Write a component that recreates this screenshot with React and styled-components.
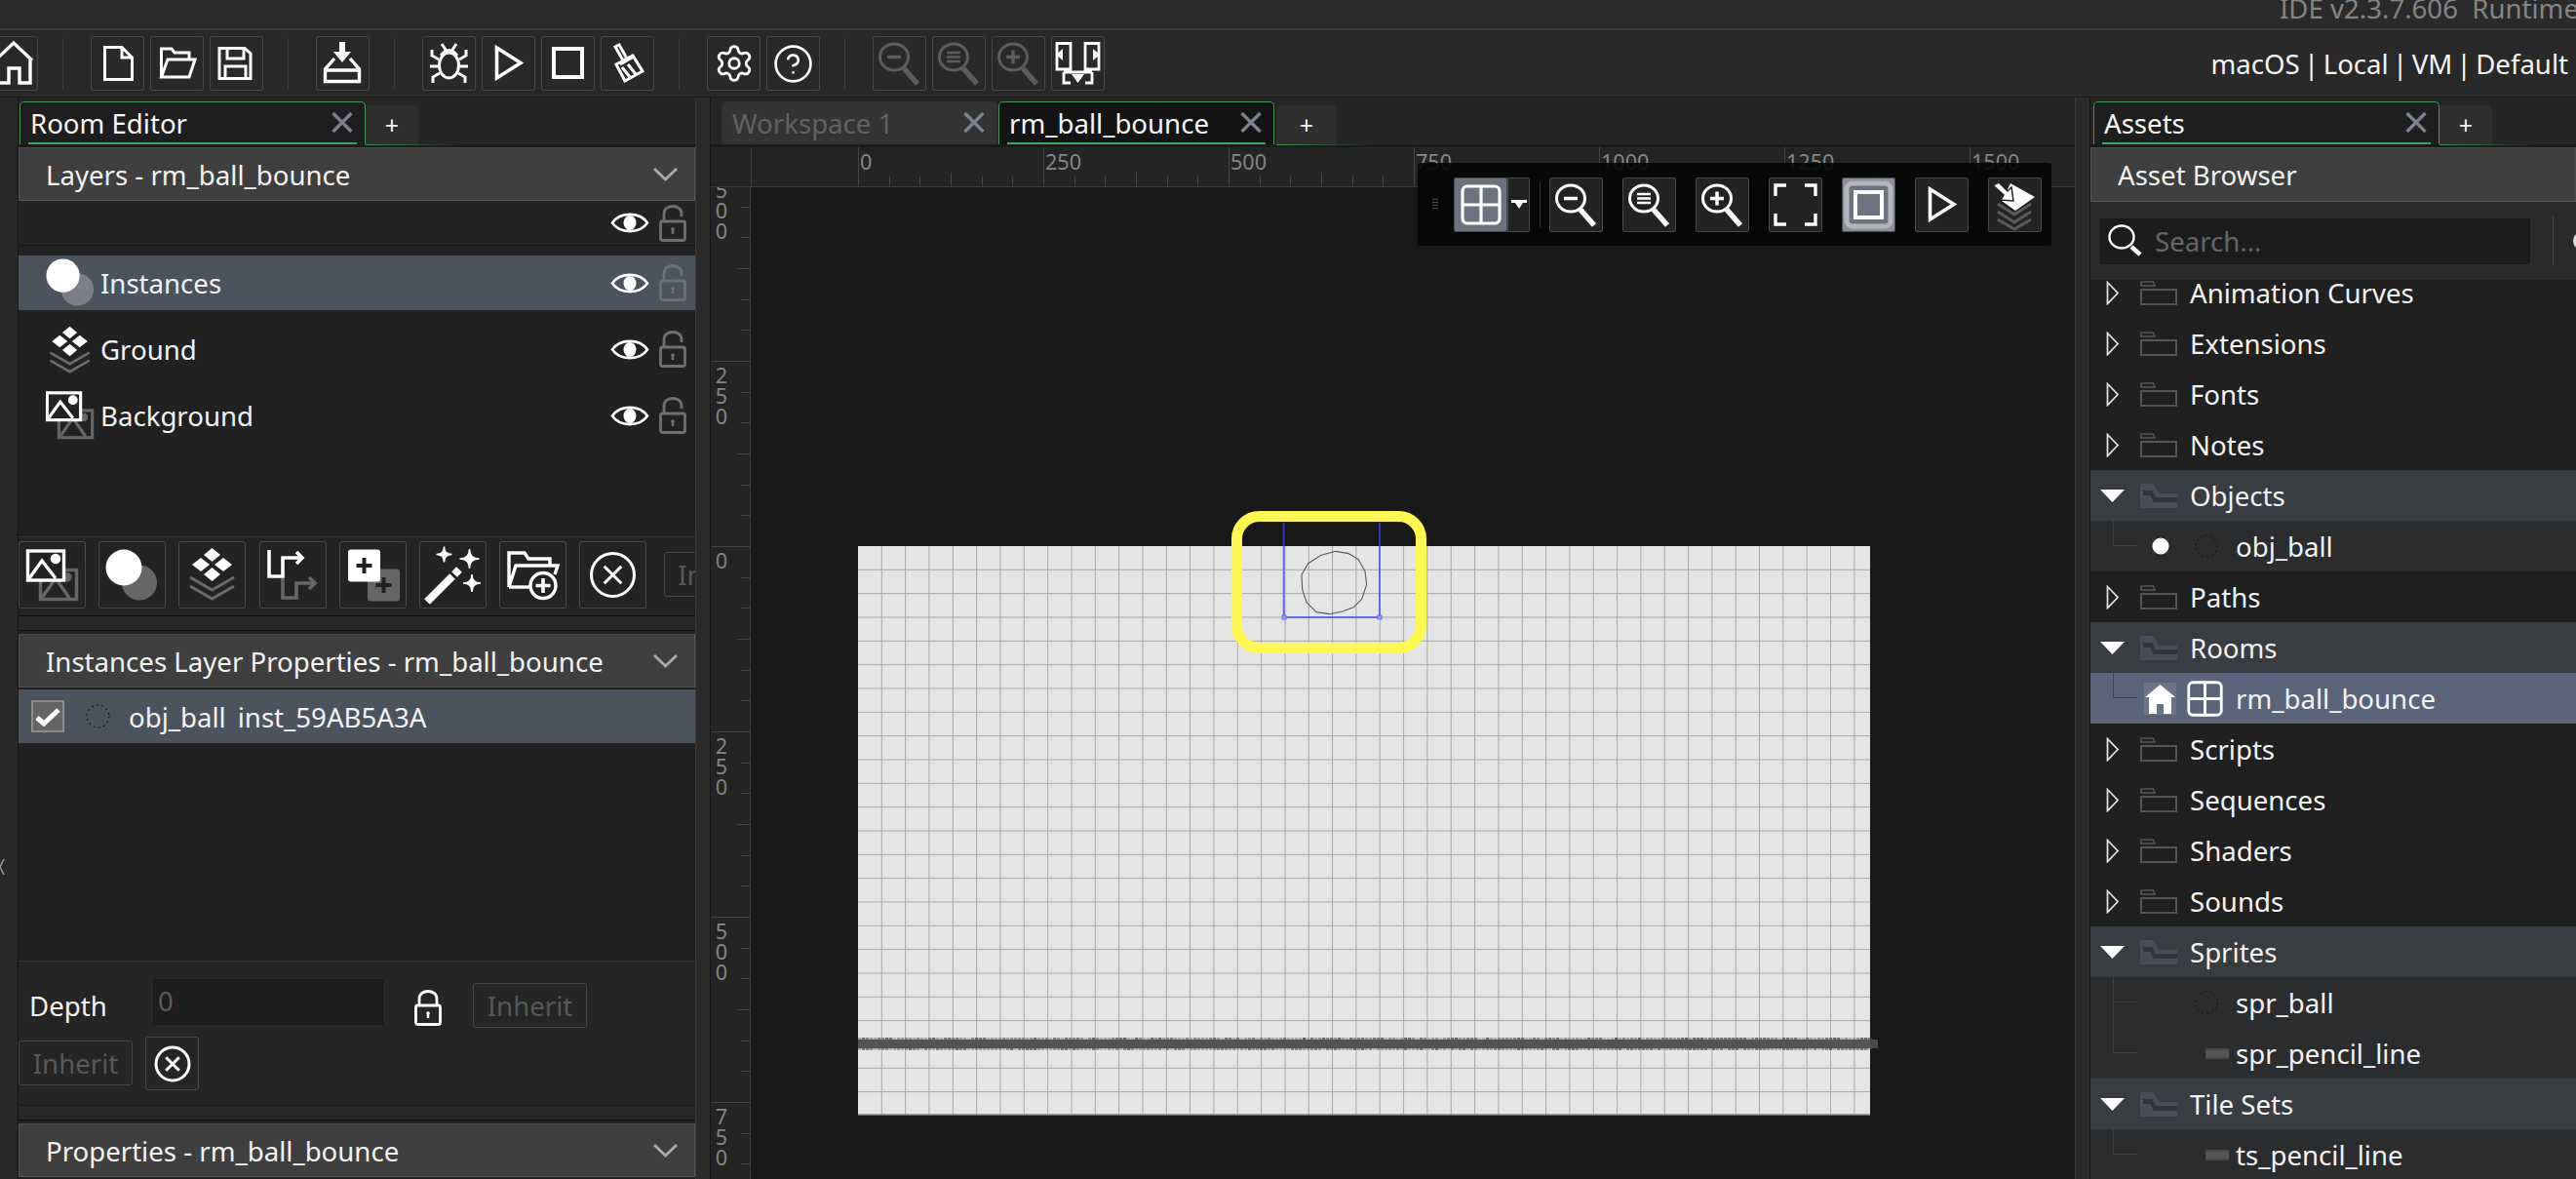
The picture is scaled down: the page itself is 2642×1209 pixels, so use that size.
import React from 'react'
import styled, { createGlobalStyle } from 'styled-components'
import { Settings, CircleHelp } from 'lucide-react'

const GlobalStyle = createGlobalStyle`
  html, body {
    margin: 0;
    background: #212121;
    overflow: hidden;
  }
  * {
    box-sizing: border-box;
  }
  svg {
    display: block;
  }
`

const Page = styled('div')`
  width: 2642px;
  height: 1209px;
  display: flex;
  flex-direction: column;
  overflow: hidden;
  background: #212121;
  color: #f2f2f2;
  font-family: 'Noto Sans', 'Open Sans', sans-serif;
  font-size: 27.6px;
  white-space: nowrap;
`

const TitleBar = styled('div')`
  height: 31px;
  flex: none;
  padding-left: 2338px;
  background: #2a2a2a;
  border-bottom: 2px solid #3c3c3c;
  color: #858585;
  overflow: hidden;
  line-height: 16px;
`

const Toolbar = styled('div')`
  height: 69px;
  flex: none;
  display: flex;
  align-items: center;
  background: #292929;
  border-bottom: 1px solid #1b1b1b;
  overflow: hidden;
`

const ToolGroup = styled('div')`
  display: flex;
  gap: 6px;
  flex: none;
  margin-left: ${p => p.$shift || 0}px;
`

const ToolSep = styled('div')`
  width: 1px;
  height: 52px;
  margin: 0 28px 0 25px;
  flex: none;
  background: #3d3d3d;
`

const ToolButton = styled('div')`
  width: 55px;
  height: 56px;
  flex: none;
  display: grid;
  place-items: center;
  border-radius: 3px;
  color: ${p => (p.$dim ? '#5c5c5c' : '#fff')};
  background: ${p => p.$bg || 'transparent'};
  box-shadow: inset 0 0 0 1px #484848;
`

const Target = styled('div')`
  margin-left: auto;
  padding-right: 8px;
  color: #f4f4f4;
  word-spacing: -2.8px;
`

const Workspace = styled('div')`
  flex: 1;
  min-height: 0;
  display: flex;
`

const Gutter = styled('div')`
  width: 19px;
  flex: none;
  padding-top: 780px;
  background: #282828;
  border-right: 1px solid #161616;
  color: #999;
`

const Splitter = styled('div')`
  width: ${p => p.$w}px;
  flex: none;
  background: #2b2b2b;
  border-left: 1px solid #3a3a3a;
  border-right: 1px solid #161616;
`

const SidePanel = styled('section')`
  width: ${p => p.$w}px;
  flex: none;
  display: flex;
  flex-direction: column;
  overflow: hidden;
  background: #212121;
`

const TabStrip = styled('div')`
  height: 51px;
  flex: none;
  display: flex;
  align-items: flex-start;
  padding: 4px 0 0 ${p => p.$pad || 1}px;
  background: #252525;
  border-bottom: 3px solid #1a1a1a;
`

const Tab = styled('div')`
  position: relative;
  width: ${p => p.$w}px;
  height: 44px;
  flex: none;
  display: flex;
  align-items: center;
  justify-content: space-between;
  margin-left: ${p => p.$left || 0}px;
  padding: 0 12px 2px 10px;
  border-radius: 5px 5px 0 0;
  border: 1px solid ${p => (p.$active ? '#3f9a55' : '#303030')};
  border-bottom: 0;
  background: ${p => p.$bg || '#1e1e1e'};
  color: ${p => (p.$active ? '#f6f6f6' : '#626262')};

  &::after {
    content: '';
    display: ${p => (p.$active ? 'block' : 'none')};
    position: absolute;
    left: 8px;
    right: 8px;
    bottom: 0;
    height: 2px;
    background: #3fa45a;
  }
`

const AddTab = styled('div')`
  position: relative;
  width: ${p => p.$w || 54}px;
  height: 40px;
  margin-top: 4px;
  margin-left: ${p => p.$left || 0}px;
  flex: none;
  display: grid;
  place-items: center;
  border-radius: 5px 5px 0 0;
  background: #2f2f2f;
  color: #f4f4f4;
  font-size: 25px;

  &::after {
    content: '';
    position: absolute;
    left: 0;
    bottom: -1px;
    width: 100px;
    height: 1px;
    background: linear-gradient(to right, #3f9a55, transparent);
  }
`

const PanelHeader = styled('div')`
  height: ${p => p.$h || 55}px;
  flex: none;
  display: flex;
  align-items: center;
  justify-content: space-between;
  padding: 0 17px 0 27px;
  background: #3f3f3f;
  border: 1px solid #565656;
  border-top-color: #4a4a4a;
`

const EyeRow = styled('div')`
  height: 46px;
  flex: none;
  display: flex;
  justify-content: flex-end;
  padding-right: 9px;
  align-items: center;
  background: #232323;
  border-bottom: 1px solid #171717;
`

const EyeLock = styled('div')`
  display: flex;
  align-items: center;
  gap: 10px;
  flex: none;
`

const LayerList = styled('div')`
  height: 299px;
  flex: none;
  display: flex;
  flex-direction: column;
  gap: 12px;
  padding-top: 10px;
  border-bottom: 1px solid #333;
`

const LayerRow = styled('div')`
  height: 56px;
  display: flex;
  align-items: center;
  padding: 0 9px 0 28px;
  background: ${p => (p.$selected ? '#4b535f' : 'transparent')};
`

const LayerName = styled('span')`
  flex: 1;
  padding-left: 6px;
`

const ButtonBar = styled('div')`
  height: 81px;
  flex: none;
  display: flex;
  gap: 13.2px;
  padding-top: 4px;
  background: #232323;
  border-bottom: 1px solid #111;
  overflow: hidden;
`

const BarButton = styled('div')`
  width: 69px;
  height: 69px;
  flex: none;
  display: grid;
  place-items: center;
  border-radius: 3px;
  box-shadow: inset 0 0 0 1px #474747;
  color: #fff;
`

const SmallButton = styled('div')`
  width: 117px;
  height: 46px;
  flex: none;
  display: grid;
  place-items: center;
  border: 1px solid #464646;
  border-radius: 3px;
  color: #585858;
  margin-top: ${p => p.$top || 0}px;
  margin-left: ${p => p.$left || 0}px;
`

const Strip = styled('div')`
  height: 15px;
  flex: none;
  background: #282828;
  border-bottom: 1px solid #111;
  margin-bottom: 3px;
`

const InstanceList = styled('div')`
  height: 281px;
  flex: none;
  padding-top: 2px;
  border-bottom: 1px solid #333;
`

const InstanceRow = styled('div')`
  height: 55px;
  display: flex;
  align-items: center;
  padding-left: 13px;
  background: #4b535f;
`

const CheckBox = styled('div')`
  width: 34px;
  height: 33px;
  flex: none;
  display: grid;
  place-items: center;
  margin-right: 22px;
  background: #646464;
  border: 2px solid #8c8c8c;
  color: #fff;
`

const InstanceName = styled('span')`
  margin: 0 ${p => p.$gap || 0}px 0 ${p => p.$left || 0}px;
`

const DepthArea = styled('div')`
  height: 148px;
  flex: none;
  padding-top: 18px;
  background: #252525;
  border-bottom: 1px solid #181818;
`

const DepthRow = styled('div')`
  display: flex;
  align-items: flex-start;
  height: ${p => p.$h}px;
`

const DepthLabel = styled('div')`
  width: 138px;
  padding: 8px 0 0 11px;
`

const DepthInput = styled('div')`
  width: 236px;
  height: 47px;
  flex: none;
  padding-left: 4px;
  line-height: 42px;
  color: #5c5c5c;
  background: #1d1d1d;
  border: 1px solid #181818;
`

const LockSlot = styled('div')`
  margin: 10px 32px 0 32px;
  color: #fff;
`

const CloseBox = styled('div')`
  width: 55px;
  height: 55px;
  margin: -4px 0 0 13px;
  flex: none;
  display: grid;
  place-items: center;
  border: 1px solid #484848;
  border-radius: 3px;
  color: #fff;
`

const CenterPanel = styled('section')`
  position: relative;
  width: 1399px;
  flex: none;
  display: flex;
  flex-direction: column;
  overflow: hidden;
  background: #181818;
`

const RulerTop = styled('svg')`
  display: block;
  flex: none;
  background: #242424;
`

const CanvasRow = styled('div')`
  flex: 1;
  min-height: 0;
  display: flex;
`

const RulerLeft = styled('svg')`
  display: block;
  flex: none;
  background: #242424;
`

const RoomCanvas = styled('svg')`
  display: block;
  flex: none;
`

const FloatBar = styled('div')`
  position: absolute;
  top: 67px;
  left: 725px;
  width: 650px;
  height: 85px;
  display: flex;
  align-items: center;
  gap: 20px;
  border-radius: 3px;
  background: rgba(6, 6, 6, 0.9);
`

const Grip = styled('div')`
  width: 6px;
  height: 11px;
  margin: 0 -4px 0 15px;
  flex: none;
  background: repeating-linear-gradient(to bottom, #4e4e4e 0 1px, transparent 1px 3px);
`

const SplitButton = styled('div')`
  display: flex;
  flex: none;
  margin-right: -10px;
`

const DropButton = styled('div')`
  width: 23px;
  height: 56px;
  display: grid;
  place-items: center;
  background: #222;
  box-shadow: inset 0 0 0 1px #484848;
  border-radius: 0 3px 3px 0;
`

const FloatSep = styled('div')`
  width: 1px;
  height: 46px;
  margin-right: -11px;
  flex: none;
  background: #343434;
`

const FloatButton = styled(ToolButton)`
  background: ${p => p.$bg || '#232323'};
`

const SearchBar = styled('div')`
  height: 80px;
  flex: none;
  display: flex;
  align-items: center;
  padding-left: 10px;
  background: #2a2a2a;
`

const SearchBox = styled('div')`
  width: 441px;
  height: 47px;
  flex: none;
  display: flex;
  align-items: center;
  gap: 12px;
  padding-left: 7px;
  background: #1c1c1c;
  border: 1px solid #181818;
  border-radius: 2px;
  color: #666;
`

const SearchSep = styled('div')`
  width: 1px;
  height: 51px;
  margin: 0 20px 0 23px;
  flex: none;
  background: #4a4a4a;
`

const SearchExtra = styled('div')`
  width: 30px;
  height: 24px;
  flex: none;
  border: 3px solid #ddd;
  border-radius: 50%;
`

const Tree = styled('div')`
  flex: 1;
  min-height: 0;
  overflow: hidden;
`

const TreeScroll = styled('div')`
  margin-top: -13px;
`

const rowColors = { plain: '#202020', open: '#393c41', child: '#2b2c2e', selected: '#5a657c' }

const TreeRow = styled('div')`
  position: relative;
  height: 52px;
  display: flex;
  align-items: center;
  padding-left: ${p => (p.$kind === 'child' || p.$kind === 'selected' ? 55 : 10)}px;
  background: ${p => rowColors[p.$kind]};
`

const ArrowSlot = styled('div')`
  width: 25px;
  margin-right: 16px;
  flex: none;
  display: grid;
  place-items: center;
  color: #fff;
`

const FolderSlot = styled('div')`
  margin-right: 13px;
  flex: none;
`

const Connector = styled('span')`
  position: absolute;
  left: 23px;
  top: 0;
  width: 25px;
  height: 26px;
  border-left: 1px solid ${p => (p.$strong ? '#3d4350' : '#3f4042')};
  border-bottom: 1px solid ${p => (p.$strong ? '#3d4350' : '#3f4042')};

  &::after {
    content: '';
    display: ${p => (p.$through ? 'block' : 'none')};
    position: absolute;
    left: -1px;
    top: 26px;
    height: 26px;
    border-left: 1px solid #3f4042;
  }
`

const MarkSlot = styled('div')`
  width: 33px;
  height: 33px;
  flex: none;
  display: grid;
  place-items: center;
  background: ${p => (p.$tint ? '#6b7486' : 'transparent')};
`

const ThumbSlot = styled('div')`
  width: 50px;
  margin-left: 11px;
  padding-left: ${p => p.$inset || 0}px;
  flex: none;
`

const PencilMark = styled('div')`
  width: 24px;
  height: 11px;
  background: #555;
  box-shadow: inset 0 2px 0 #484848, inset 0 -2px 0 #484848;
`

const CloseX = () => (
  <svg width="22" height="21" viewBox="0 0 22 21" fill="none" stroke="#7b8391" strokeWidth="3.4">
    <path d="M1.5 1 L20.5 20 M20.5 1 L1.5 20" />
  </svg>
)

const Chevron = () => (
  <svg width="25" height="16" viewBox="0 0 25 16" fill="none" stroke="#a9a9a9" strokeWidth="3">
    <path d="M1 2 L12.5 13 L24 2" />
  </svg>
)

const Eye = () => (
  <svg width="40" height="27" viewBox="0 0 40 27" fill="none" stroke="#fff" strokeWidth="2.6">
    <path d="M2 13.5 C10 2 30 2 38 13.5 C30 25 10 25 2 13.5 Z" />
    <ellipse cx="20" cy="13.5" rx="6.5" ry="7.5" fill="#fff" stroke="none" />
  </svg>
)

const Lock = ({ open, color }) => (
  <svg width="28" height="38" viewBox="0 0 28 38" fill="none" stroke={color} strokeWidth="2.8">
    <rect x="1.5" y="17" width="25" height="19.5" rx="2" />
    <path d={open ? 'M5 17 V9 C5 -1 23 -1 23 9 V12' : 'M5 17 V10 C5 0 23 0 23 10 V17'} />
    <path d="M14 24 V30" strokeWidth="2.5" />
    <circle cx="14" cy="25" r="1.8" fill={color} stroke="none" />
  </svg>
)

const Glass = ({ mark }) => (
  <svg width="55" height="56" viewBox="0 0 55 56" fill="none" stroke="currentColor" strokeWidth="3">
    <ellipse cx="22" cy="21.5" rx="14.5" ry="13.5" />
    <path d="M32 33 L46 49" strokeWidth="5.5" />
    {mark === 'minus' && <path d="M15 21.5 H29" strokeWidth="3.5" />}
    {mark === 'equal' && <path d="M15 17 H29 M15 21.5 H29 M15 26 H29" strokeWidth="2.6" />}
    {mark === 'plus' && <path d="M15 21.5 H29 M22 14.5 V28.5" strokeWidth="3.5" />}
  </svg>
)

const Tool = ({ children, sw = 3, fill = 'none' }) => (
  <svg width="55" height="56" viewBox="0 0 55 56" fill={fill} stroke="currentColor" strokeWidth={sw}>
    {children}
  </svg>
)

const HomeIcon = () => (
  <Tool sw={3.4}>
    <path d="M11 25 L30 7 L49 25 M14 22 V48 H25 V33 H36 V48 H47 V22" />
  </Tool>
)
const FileIcon = () => (
  <Tool>
    <path d="M14.5 11.5 H32 L42.5 22 V44.5 H14.5 Z M32 12 V22 H42" />
  </Tool>
)
const OpenIcon = () => (
  <Tool>
    <path d="M11.5 42 V13 H22 L25 17 H40 V24 M11.5 42 L18 24 H46 L40 42 Z" />
  </Tool>
)
const SaveIcon = () => (
  <Tool>
    <path d="M10 12.5 H36 L42 18 V43.5 H10 Z M18 13 V23 H35 V13 M16 43 V31 H37 V43" />
  </Tool>
)
const ImportIcon = () => (
  <Tool sw={3.4}>
    <path d="M19 23 L9.5 34 V46.5 H44.5 V34 L35 23 M9.5 35 H44.5" />
    <path d="M24 6 H30 V16 H36 L27 27 L18 16 H24 Z" fill="currentColor" stroke="none" />
  </Tool>
)
const BugIcon = () => (
  <Tool>
    <ellipse cx="27.5" cy="30" rx="10" ry="13" />
    <path d="M19 20 Q27.5 9 36 20 M20 8 L24 14 M35 8 L31 14 M17 24 L10 20 V14 M38 24 L45 20 V14 M16 31 H8 M39 31 H47 M18 38 L11 42 V48 M37 38 L44 42 V48" />
  </Tool>
)
const PlayIcon = () => (
  <Tool sw={3.6}>
    <path d="M15.5 12 L40 27.5 L15.5 43 Z" />
  </Tool>
)
const StopIcon = () => (
  <Tool sw={4}>
    <rect x="13" y="13" width="29" height="29" />
  </Tool>
)
const BroomIcon = () => (
  <Tool>
    <path d="M15 11 L19 9 L27 23 L23 25 Z M16 29 L33 20 L43 36 L25 46 Z M22 32 L30 42 M28 29 L36 39 M20 29 L34 21" />
  </Tool>
)
const LayoutIcon = () => (
  <Tool sw={2.8}>
    <path d="M6 7.5 H20 V34 H6 Z M35 7.5 H49 V34 H35 Z M13 37 H42 M13 37 V48 H20 M42 37 V48 H35" />
    <path d="M5 19 L12 13 V25 Z M50 19 L43 13 V25 Z M21 39 H34 L27.5 48 Z" fill="currentColor" stroke="none" />
  </Tool>
)

const Bar = ({ children, box = '0 0 69 69', w = 69, h = 69 }) => (
  <svg width={w} height={h} viewBox={box} fill="none">
    {children}
  </svg>
)

const ImageArt = () => (
  <>
    <g stroke="#666" strokeWidth="3.4">
      <rect x="22.5" y="29.5" width="37" height="30" />
      <path d="M24 58 L38 38 L52 58" />
      <circle cx="50" cy="37" r="3" fill="#666" />
    </g>
    <g stroke="#fff" strokeWidth="3.4">
      <rect x="9.5" y="10" width="37" height="30" fill="#222" />
      <path d="M11 38 L24 20 L38 38" />
      <circle cx="38" cy="18" r="3.6" fill="#fff" />
    </g>
  </>
)
const BallArt = ({ grey = '#666' }) => (
  <>
    <circle cx="42" cy="42.5" r="18" fill={grey} />
    <circle cx="26" cy="27" r="18.5" fill="#fff" />
  </>
)
const TileArt = () => (
  <>
    <path d="M12 37 L34.5 50 L57 37 M12 46 L34.5 59 L57 46" stroke="#6a6a6a" strokeWidth="3" />
    <path d="M34.5 7 L43 14 L34.5 21 L26 14 Z M23 17 L32 24 L23 31 L14 24 Z M46 17 L55 24 L46 31 L37 24 Z M34.5 27 L43 34 L34.5 41 L26 34 Z" fill="#fff" />
  </>
)
const PathArt = () => (
  <>
    <path d="M24 38 V58 H38 V43 H55 M51 37 L57 43 L51 49" stroke="#666" strokeWidth="3.6" />
    <path d="M10 9 V36 H24 V17 H42 M38 11 L44 17 L38 23" stroke="#fff" strokeWidth="3.6" />
  </>
)
const AddArt = () => (
  <>
    <rect x="29" y="28.5" width="33" height="33" rx="3" fill="#666" />
    <path d="M45.5 37 V53 M37.5 45 H53.5" stroke="#222" strokeWidth="4" />
    <rect x="9" y="8.5" width="33" height="33" rx="3" fill="#fff" />
    <path d="M25.5 17 V33 M17.5 25 H33.5" stroke="#222" strokeWidth="4" />
  </>
)
const star = (x, y, r) =>
  `M${x} ${y - r} Q${x} ${y} ${x + r} ${y} Q${x} ${y} ${x} ${y + r} Q${x} ${y} ${x - r} ${y} Q${x} ${y} ${x} ${y - r} Z`
const WandArt = () => (
  <>
    <path d="M8 62 L34 36" stroke="#fff" strokeWidth="8" />
    <path d="M36 34 L41 29" stroke="#fff" strokeWidth="8" />
    <path d={star(25.5, 13.5, 8) + star(51.5, 18, 10) + star(54, 43, 9)} fill="#fff" stroke="#fff" strokeWidth="1.5" />
  </>
)
const FolderAddArt = () => (
  <>
    <path d="M10 47 V12 H26 L30 18 H52 V24 M10 47 L17 25 H60 L57 34" stroke="#fff" strokeWidth="3.4" />
    <path d="M10 47 H33" stroke="#fff" strokeWidth="3.4" />
    <circle cx="45" cy="45.5" r="13" stroke="#fff" strokeWidth="3.4" fill="#222" />
    <path d="M45 38 V53 M37.5 45.5 H52.5" stroke="#fff" strokeWidth="3.6" />
  </>
)

const CircleCross = ({ size = 69, r = 22 }) => {
  const c = size / 2
  const a = r * 0.4
  return (
    <svg width={size} height={size} viewBox={`0 0 ${size} ${size}`} fill="none" stroke="currentColor" strokeWidth="3">
      <circle cx={c} cy={c} r={r} />
      <path d={`M${c - a} ${c - a} L${c + a} ${c + a} M${c + a} ${c - a} L${c - a} ${c + a}`} />
    </svg>
  )
}

const GridIcon = ({ size = 55, r = 4 }) => (
  <svg width={size} height={size} viewBox="0 0 42 42" fill="none" stroke="#fff" strokeWidth="3.2">
    <rect x="2" y="2" width="38" height="38" rx={r} />
    <path d="M21 2 V40 M2 21 H40" />
  </svg>
)

const DottedBall = ({ size = 24 }) => (
  <svg width={size} height={size} viewBox="0 0 24 24" fill="none" stroke="#111" strokeWidth="1" strokeDasharray="2 3">
    <circle cx="12" cy="12" r="11" />
  </svg>
)

const ClosedFolder = () => (
  <svg width="38" height="25" viewBox="0 0 38 25" fill="none" stroke="#555">
    <rect x="1" y="9" width="36" height="15" strokeWidth="2" />
    <path d="M1 5 V1 H13.5 L15 5 Z" strokeWidth="1.6" />
  </svg>
)

const OpenFolder = () => (
  <svg width="38" height="25" viewBox="0 0 38 25">
    <path d="M0 0 H13 L20 10 H38 V25 H0 Z" fill="#474e56" />
    <path d="M3 7 H12 L16 14 H38 V19 H14 L10 12 H3 Z" fill="#30343a" />
  </svg>
)

const ArrowClosed = () => (
  <svg width="14" height="25" viewBox="0 0 14 25" fill="none" stroke="#ddd" strokeWidth="1.8">
    <path d="M1.5 1.5 L12 12.5 L1.5 23.5 Z" />
  </svg>
)

const ArrowOpen = () => (
  <svg width="25" height="13" viewBox="0 0 25 13">
    <path d="M0 0 H25 L12.5 13 Z" fill="#fff" />
  </svg>
)

const HouseFill = () => (
  <svg width="31" height="31" viewBox="0 0 31 31">
    <path d="M15.5 1 L31 14 H27 V31 H19 V21 H12 V31 H4 V14 H0 Z" fill="#fff" />
  </svg>
)

const PANEL_TREE = [
  { label: 'Animation Curves' },
  { label: 'Extensions' },
  { label: 'Fonts' },
  { label: 'Notes' },
  { label: 'Objects', open: true },
  { label: 'obj_ball', child: 'ball', dot: true },
  { label: 'Paths' },
  { label: 'Rooms', open: true },
  { label: 'rm_ball_bounce', child: 'room', selected: true },
  { label: 'Scripts' },
  { label: 'Sequences' },
  { label: 'Shaders' },
  { label: 'Sounds' },
  { label: 'Sprites', open: true },
  { label: 'spr_ball', child: 'ball', through: true },
  { label: 'spr_pencil_line', child: 'pencil' },
  { label: 'Tile Sets', open: true },
  { label: 'ts_pencil_line', child: 'pencil' },
]

const AssetRow = ({ item }) => {
  if (item.child) {
    return (
      <TreeRow $kind={item.selected ? 'selected' : 'child'}>
        <Connector $through={item.through} $strong={item.selected} />
        <MarkSlot $tint={item.selected}>
          {item.dot && <svg width="18" height="18"><circle cx="9" cy="9" r="8.6" fill="#fff" /></svg>}
          {item.selected && <HouseFill />}
        </MarkSlot>
        <ThumbSlot $inset={item.child === 'ball' ? 8 : item.child === 'pencil' ? 19 : 0}>
          {item.child === 'ball' && <DottedBall />}
          {item.child === 'room' && <GridIcon size={37} r={5} />}
          {item.child === 'pencil' && <PencilMark />}
        </ThumbSlot>
        {item.label}
      </TreeRow>
    )
  }
  return (
    <TreeRow $kind={item.open ? 'open' : 'plain'}>
      <ArrowSlot>{item.open ? <ArrowOpen /> : <ArrowClosed />}</ArrowSlot>
      <FolderSlot>{item.open ? <OpenFolder /> : <ClosedFolder />}</FolderSlot>
      {item.label}
    </TreeRow>
  )
}

const LAYERS = [
  { name: 'Instances', selected: true, art: <BallArt grey="#7c7f85" />, box: '7 8 54 54' },
  { name: 'Ground', art: <TileArt />, box: '10 5 50 56' },
  { name: 'Background', art: <ImageArt />, box: '8 8 54 54' },
]

const xMain = [880, 1070, 1260, 1450, 1640, 1830, 2020]
const xLabels = ['0', '250', '500', '750', '1000', '1250', '1500']
const ticks = []
for (let i = 0; i < 39; i++) ticks.push(i)

const TopRuler = () => (
  <RulerTop width="1399" height="41" viewBox="729 150 1399 41">
    <line x1="770.5" y1="150" x2="770.5" y2="191" stroke="#3a3a3a" />
    <line x1="729" y1="190.5" x2="2128" y2="190.5" stroke="#3c3c3c" />
    {ticks.map(i => {
      const x = Math.round(880 + i * 31.667) + 0.5
      const main = i % 6 === 0
      const mid = i % 3 === 0
      return <line key={i} x1={x} x2={x} y1={main ? 150 : mid ? 176 : 180} y2="190" stroke="#444" />
    })}
    {xMain.map((x, i) => (
      <text key={x} x={x + 2} y="173" fontSize="21.6" fill="#858585" fontFamily="Noto Sans">
        {xLabels[i]}
      </text>
    ))}
  </RulerTop>
)

const yLabels = [
  { y: 179, t: '500' },
  { y: 369, t: '250' },
  { y: 559, t: '0' },
  { y: 749, t: '250' },
  { y: 939, t: '500' },
  { y: 1129, t: '750' },
]

const LeftRuler = () => (
  <RulerLeft width="41" height="1018" viewBox="729 191 41 1018">
    <line x1="770" y1="191" x2="770" y2="1209" stroke="#3a3a3a" strokeWidth="2" />
    {ticks.map(i => {
      if (i > 33) return null
      const y = Math.round(179 + i * 31.667) + 0.5
      const main = i % 6 === 0
      const mid = i % 3 === 0
      return <line key={i} y1={y} y2={y} x1={main ? 730 : mid ? 756 : 760} x2="770" stroke="#444" />
    })}
    {yLabels.map(l =>
      l.t.split('').map((d, i) => (
        <text key={l.y + '-' + i} x="740" y={l.y + 23 + i * 21} textAnchor="middle" fontSize="21.6" fill="#858585" fontFamily="Noto Sans">
          {d}
        </text>
      ))
    )}
  </RulerLeft>
)

const gridX = []
for (let i = 1; i * 24.33 < 1038; i++) gridX.push(880 + i * 24.33)
const gridY = []
for (let i = 1; i * 24.33 < 583; i++) gridY.push(559 + i * 24.33)
const noise = []
for (let x = 880; x < 1918; x += 4) {
  const n = Math.abs(Math.sin(x * 12.9898) * 43758.5453) % 1
  const m = Math.abs(Math.sin(x * 78.233) * 12543.123) % 1
  noise.push({ x, top: n, bottom: m })
}
const ballPts = [
  [450, 193], [490, 200], [520, 218], [540, 255], [545, 295], [530, 340], [505, 365], [470, 378],
  [430, 386], [390, 380], [360, 350], [347, 310], [345, 265], [365, 230], [405, 205],
]
  .map(([x, y]) => `${1220 + x / 3},${500 + y / 3}`)
  .join(' ')

const Room = () => (
  <RoomCanvas width="1358" height="1018" viewBox="770 191 1358 1018">
    <rect x="880" y="559" width="1038" height="583" fill="#e5e5e5" />
    {gridX.map(x => <line key={x} x1={x} x2={x} y1="559" y2="1142" stroke="#a8a8a8" />)}
    {gridY.map(y => <line key={y} y1={y} y2={y} x1="880" x2="1918" stroke="#a8a8a8" />)}
    <line x1="880" x2="1918" y1="1142" y2="1142" stroke="#8a8a8a" strokeWidth="1.4" />
    <rect x="880" y="1065" width="1046" height="9" fill="#4c4c4c" opacity="0.95" />
    {noise.map(n => (
      <g key={n.x} fill="#555">
        <rect x={n.x} y="1063" width="3.4" height="2" opacity={0.3 + n.top * 0.6} />
        <rect x={n.x} y="1074" width="3.4" height="1.8" opacity={0.3 + n.bottom * 0.6} />
      </g>
    ))}
    <polygon points={ballPts} fill="none" stroke="#5a5a5a" strokeWidth="1.1" strokeLinejoin="round" />
    <path d="M1316.7 535 V559 M1415 535 V559" stroke="#3131c4" strokeWidth="2" />
    <path d="M1316.7 559 V632 H1415 V559" stroke="#6666ee" strokeWidth="2" fill="none" />
    <rect x="1315" y="630" width="4" height="4" fill="#a5a5f2" stroke="#6666ee" />
    <rect x="1413" y="630" width="4" height="4" fill="#a5a5f2" stroke="#6666ee" />
    <rect x="1268.5" y="528.5" width="189" height="135" rx="23" fill="none" stroke="#fff84f" strokeWidth="11" />
  </RoomCanvas>
)

const App = () => (
  <Page>
    <GlobalStyle />
    <TitleBar>IDE v2.3.7.606&nbsp;&nbsp;Runtime v2.3.7.476</TitleBar>
    <Toolbar>
      <ToolGroup $shift={-16}>
        <ToolButton><HomeIcon /></ToolButton>
      </ToolGroup>
      <ToolSep />
      <ToolGroup>
        <ToolButton><FileIcon /></ToolButton>
        <ToolButton><OpenIcon /></ToolButton>
        <ToolButton><SaveIcon /></ToolButton>
      </ToolGroup>
      <ToolSep />
      <ToolGroup>
        <ToolButton><ImportIcon /></ToolButton>
      </ToolGroup>
      <ToolSep />
      <ToolGroup>
        <ToolButton><BugIcon /></ToolButton>
        <ToolButton><PlayIcon /></ToolButton>
        <ToolButton><StopIcon /></ToolButton>
        <ToolButton><BroomIcon /></ToolButton>
      </ToolGroup>
      <ToolSep />
      <ToolGroup>
        <ToolButton><Settings size={42} strokeWidth={1.6} /></ToolButton>
        <ToolButton><CircleHelp size={43} strokeWidth={1.5} /></ToolButton>
      </ToolGroup>
      <ToolSep />
      <ToolGroup>
        <ToolButton $dim><Glass mark="minus" /></ToolButton>
        <ToolButton $dim><Glass mark="equal" /></ToolButton>
        <ToolButton $dim><Glass mark="plus" /></ToolButton>
        <ToolButton><LayoutIcon /></ToolButton>
      </ToolGroup>
      <Target>macOS | Local | VM | Default</Target>
    </Toolbar>

    <Workspace>
      <Gutter>
        <svg width="6" height="18" viewBox="0 0 6 18" fill="none" stroke="currentColor" strokeWidth="1.5">
          <path d="M4 1 L0 9 L4 17" />
        </svg>
      </Gutter>

      <SidePanel $w={694}>
        <TabStrip>
          <Tab $w={355} $active>Room Editor<CloseX /></Tab>
          <AddTab>+</AddTab>
        </TabStrip>
        <PanelHeader>Layers - rm_ball_bounce<Chevron /></PanelHeader>
        <EyeRow>
          <EyeLock><Eye /><Lock open color="#6f6f6f" /></EyeLock>
        </EyeRow>
        <LayerList>
          {LAYERS.map(l => (
            <LayerRow key={l.name} $selected={l.selected}>
              <Bar box={l.box} w={50} h={50}>{l.art}</Bar>
              <LayerName>{l.name}</LayerName>
              <EyeLock><Eye /><Lock open color="#6f6f6f" /></EyeLock>
            </LayerRow>
          ))}
        </LayerList>
        <ButtonBar>
          <BarButton><Bar><ImageArt /></Bar></BarButton>
          <BarButton><Bar><BallArt /></Bar></BarButton>
          <BarButton><Bar><TileArt /></Bar></BarButton>
          <BarButton><Bar><PathArt /></Bar></BarButton>
          <BarButton><Bar><AddArt /></Bar></BarButton>
          <BarButton><Bar><WandArt /></Bar></BarButton>
          <BarButton><Bar><FolderAddArt /></Bar></BarButton>
          <BarButton><CircleCross /></BarButton>
          <SmallButton $top={11} $left={4}>Inherit</SmallButton>
        </ButtonBar>
        <Strip />
        <PanelHeader>Instances Layer Properties - rm_ball_bounce<Chevron /></PanelHeader>
        <InstanceList>
          <InstanceRow>
            <CheckBox>
              <svg width="26" height="20" viewBox="0 0 26 20" fill="none" stroke="currentColor" strokeWidth="5">
                <path d="M2 11 L9 17 L24 3" />
              </svg>
            </CheckBox>
            <DottedBall size={25} />
            <InstanceName $left={19} $gap={12}>obj_ball</InstanceName>
            <InstanceName>inst_59AB5A3A</InstanceName>
          </InstanceRow>
        </InstanceList>
        <DepthArea>
          <DepthRow $h={63}>
            <DepthLabel>Depth</DepthLabel>
            <DepthInput>0</DepthInput>
            <LockSlot><Lock color="#fff" /></LockSlot>
            <SmallButton $top={4}>Inherit</SmallButton>
          </DepthRow>
          <DepthRow $h={57}>
            <SmallButton>Inherit</SmallButton>
            <CloseBox><CircleCross size={40} r={17} /></CloseBox>
          </DepthRow>
        </DepthArea>
        <Strip />
        <PanelHeader>Properties - rm_ball_bounce<Chevron /></PanelHeader>
      </SidePanel>

      <Splitter $w={16} />

      <CenterPanel>
        <TabStrip $pad={11}>
          <Tab $w={283} $bg="#333333">Workspace 1<CloseX /></Tab>
          <Tab $w={283} $bg="#141414" $active $left={1}>rm_ball_bounce<CloseX /></Tab>
          <AddTab $w={62} $left={2}>+</AddTab>
        </TabStrip>
        <TopRuler />
        <CanvasRow>
          <LeftRuler />
          <Room />
        </CanvasRow>
        <FloatBar>
          <Grip />
          <SplitButton>
            <FloatButton $bg="#6c7280"><GridIcon size={42} r={5} /></FloatButton>
            <DropButton>
              <svg width="16" height="10" viewBox="0 0 16 10"><path d="M0 0 H16 V3 H12 L8 9 L4 3 H0 Z" fill="#fff" /></svg>
            </DropButton>
          </SplitButton>
          <FloatSep />
          <FloatButton><Glass mark="minus" /></FloatButton>
          <FloatButton><Glass mark="equal" /></FloatButton>
          <FloatButton><Glass mark="plus" /></FloatButton>
          <FloatButton>
            <Tool sw={3.4}>
              <path d="M7 19 V8 H18 M37 8 H48 V19 M48 37 V48 H37 M18 48 H7 V37" />
            </Tool>
          </FloatButton>
          <FloatButton $bg="#8d909b">
            <svg width="55" height="56" viewBox="0 0 55 56" fill="none">
              <rect x="5" y="6" width="45" height="44" rx="6" stroke="#b4b6be" strokeWidth="5" fill="#6c7280" />
              <rect x="14" y="15" width="27" height="26" stroke="#fff" strokeWidth="4" fill="#6c7280" />
            </svg>
          </FloatButton>
          <FloatButton><PlayIcon /></FloatButton>
          <FloatButton>
            <svg width="55" height="56" viewBox="0 0 55 56" fill="none">
              <path d="M10 27 L27 38 L44 27 M10 35 L27 46 L44 35 M10 43 L27 53 L44 43" stroke="#5a5a5a" strokeWidth="3" />
              <path d="M23 6 L48 20 L28 34 L14 24 Z" fill="#fff" />
              <path d="M5 8 L11 5 L20 14 L24 10 L26 24 L13 23 L16 18 Z" fill="#fff" stroke="#232323" strokeWidth="1.5" />
            </svg>
          </FloatButton>
        </FloatBar>
      </CenterPanel>

      <Splitter $w={16} />

      <SidePanel $w={498}>
        <TabStrip $pad={3}>
          <Tab $w={355} $active>Assets<CloseX /></Tab>
          <AddTab>+</AddTab>
        </TabStrip>
        <PanelHeader $h={56}>Asset Browser</PanelHeader>
        <SearchBar>
          <SearchBox>
            <svg width="36" height="34" viewBox="0 0 36 34" fill="none" stroke="#fff" strokeWidth="2.4">
              <ellipse cx="14" cy="13" rx="12.5" ry="11.5" />
              <path d="M24 23 L33 31" strokeWidth="4.5" />
            </svg>
            Search...
          </SearchBox>
          <SearchSep />
          <SearchExtra />
        </SearchBar>
        <Tree>
          <TreeScroll>
            {PANEL_TREE.map(item => <AssetRow key={item.label} item={item} />)}
          </TreeScroll>
        </Tree>
      </SidePanel>
    </Workspace>
  </Page>
)

export default App
